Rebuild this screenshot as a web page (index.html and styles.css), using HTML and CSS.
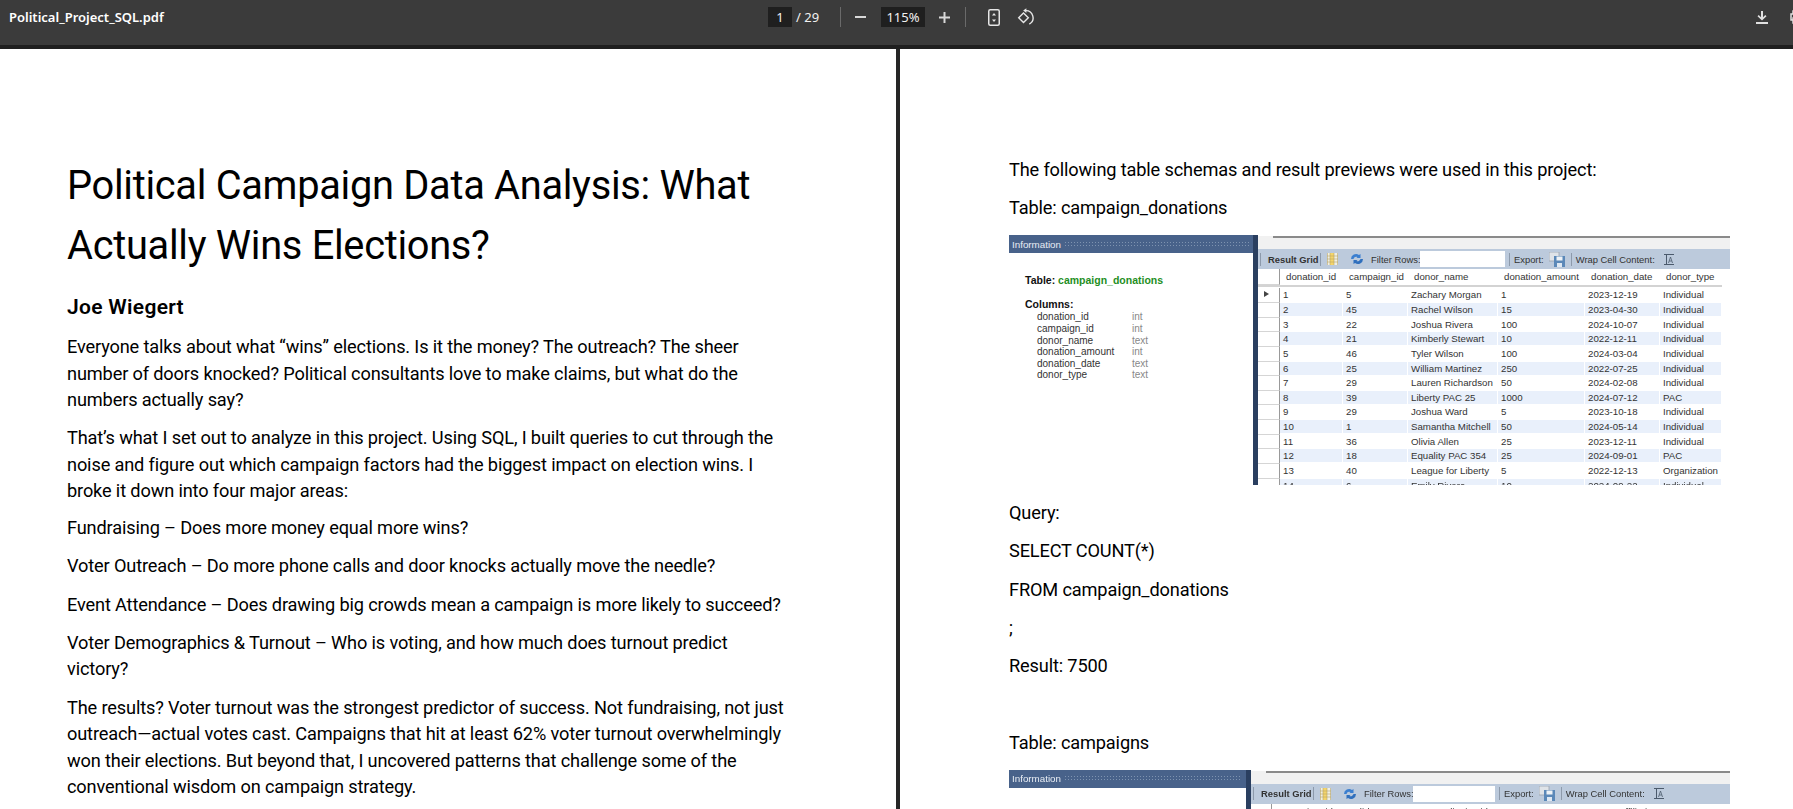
FILE: index.html
```html
<!DOCTYPE html>
<html lang="en">
<head>
<meta charset="utf-8">
<title>Political_Project_SQL.pdf</title>
<link rel="stylesheet" href="styles.css">
</head>
<body>
<header class="toolbar">
  <div class="file">Political_Project_SQL.pdf</div>
  <div class="pager"><span class="box box-page">1</span><span class="total">/ 29</span></div>
  <span class="tsep tsep-a"></span>
  <svg class="ticon minus" width="11" height="2" viewBox="0 0 11 2"><rect width="11" height="2" fill="#d8d8d8"/></svg>
  <span class="box box-zoom">115%</span>
  <svg class="ticon plus" width="11" height="11" viewBox="0 0 11 11"><path d="M4.5 0h2v4.500h4.500v2h-4.500v4.500h-2v-4.500h-4.500v-2h4.500z" fill="#d8d8d8"/></svg>
  <span class="tsep tsep-b"></span>
  <svg class="ticon fit" width="12" height="17" viewBox="0 0 12 17"><rect x=".75" y=".75" width="10.500" height="15.500" rx="1.500" fill="none" stroke="#e6e6e6" stroke-width="1.500"/><path d="M6 4l2 2.500h-4zM6 13l-2-2.500h4z" fill="#e6e6e6"/></svg>
  <svg class="ticon rotate" width="18" height="18" viewBox="0 0 18 18"><path d="M6.500 5l4.800 4.800-4.800 4.800-4.800-4.800z" fill="none" stroke="#e6e6e6" stroke-width="1.400"/><path d="M8.500 2.600a7.200 7.200 0 0 1 3.800 13.500" fill="none" stroke="#e6e6e6" stroke-width="1.400"/><path d="M9.400 .2v4.800l-3.200-2.400z" fill="#e6e6e6"/></svg>
  <svg class="ticon download" width="12" height="13" viewBox="0 0 12 13"><path d="M5 0h2v6.200l2.300-2.200 1.200 1.200-4.500 4.300-4.500-4.300 1.200-1.200 2.300 2.200zM0 11h12v2h-12z" fill="#e0e0e0"/></svg>
  <svg class="ticon print" width="14" height="14" viewBox="0 0 14 14"><path d="M3 4v-3h8v3M3 10h-2v-6h12v6h-2M3 8h8v5h-8z" fill="none" stroke="#e0e0e0" stroke-width="1.500"/></svg>
</header>

<main class="viewer">
  <section class="page page-left">
    <h1>Political Campaign Data Analysis: What<br>Actually Wins Elections?</h1>
    <h2>Joe Wiegert</h2>
    <p>Everyone talks about what “wins” elections. Is it the money? The outreach? The sheer<br>number of doors knocked? Political consultants love to make claims, but what do the<br>numbers actually say?</p>
    <p class="tight">That’s what I set out to analyze in this project. Using SQL, I built queries to cut through the<br>noise and figure out which campaign factors had the biggest impact on election wins. I<br>broke it down into four major areas:</p>
    <p>Fundraising – Does more money equal more wins?</p>
    <p>Voter Outreach – Do more phone calls and door knocks actually move the needle?</p>
    <p>Event Attendance – Does drawing big crowds mean a campaign is more likely to succeed?</p>
    <p>Voter Demographics &amp; Turnout – Who is voting, and how much does turnout predict<br>victory?</p>
    <p>The results? Voter turnout was the strongest predictor of success. Not fundraising, not just<br>outreach—actual votes cast. Campaigns that hit at least 62% voter turnout overwhelmingly<br>won their elections. But beyond that, I uncovered patterns that challenge some of the<br>conventional wisdom on campaign strategy.</p>
  </section>

  <section class="page page-right">
    <p>The following table schemas and result previews were used in this project:</p>
    <p class="before-shot">Table: campaign_donations</p>

    <div class="shot shot-one">
      <div class="info">
        <div class="info-head"><span>Information</span><i class="dots"></i></div>
        <div class="info-body">
          <div class="info-title">Table: <b>campaign_donations</b></div>
          <div class="info-cols">Columns:</div>
          <dl class="schema">
            <dt>donation_id</dt><dd>int</dd>
            <dt>campaign_id</dt><dd>int</dd>
            <dt>donor_name</dt><dd>text</dd>
            <dt>donation_amount</dt><dd>int</dd>
            <dt>donation_date</dt><dd>text</dd>
            <dt>donor_type</dt><dd>text</dd>
          </dl>
        </div>
      </div>
      <div class="results">
        <div class="strip"></div>
        <div class="rbar">
          <span class="rsep"></span><b class="rlabel">Result Grid</b><span class="rsep"></span>
          <svg class="ri ri-grid" width="11" height="12" viewBox="0 0 11 12"><rect width="11" height="12" fill="#f0f0e4"/><rect x="3" width="4" height="12" fill="#f4d56a"/><path d="M.5 0v12M3 0v12M7 0v12M10.500 0v12M0 3h11M0 6h11M0 9h11" stroke="#b9a56a" stroke-width=".6"/></svg>
          <svg class="ri ri-sync" width="14" height="12" viewBox="0 0 14 12"><path d="M1 6a5 5 0 0 1 8-4l1.500-1v4h-4l1-1a3 3 0 0 0-4 2z" fill="#3b7fd0"/><path d="M13 6a5 5 0 0 1-8 4l-1.500 1v-4h4l-1 1a3 3 0 0 0 4-2z" fill="#2f6fbd"/></svg>
          <span class="rtext rfilter">Filter Rows:</span><span class="rinput"></span><span class="rsep"></span>
          <span class="rtext">Export:</span>
          <svg class="ri ri-save" width="16" height="15" viewBox="0 0 16 15"><rect width="10" height="9" fill="#dfe3e8" stroke="#9aa4b0" stroke-width=".8"/><rect x="5" y="4" width="11" height="11" fill="#5b88b8"/><rect x="7.500" y="4.500" width="6" height="4" fill="#eef2f6"/><rect x="8" y="11" width="5" height="4" fill="#dfe8f2"/></svg>
          <span class="rsep"></span><span class="rtext">Wrap Cell Content:</span>
          <svg class="ri ri-wrap" width="10" height="11" viewBox="0 0 10 11"><path d="M0 .5h10M0 10.500h10M2.500 1v9" stroke="#4b5a6c" fill="none"/><path d="M4.500 9l2-6 2 6M5.300 7h2.400" stroke="#4b5a6c" fill="none" stroke-width=".8"/></svg>
        </div>
        <div class="grid">
          <div class="row head"><span></span><span>donation_id</span><span>campaign_id</span><span>donor_name</span><span>donation_amount</span><span>donation_date</span><span>donor_type</span></div>
          <div class="row"><span class="mark"></span><span>1</span><span>5</span><span>Zachary Morgan</span><span>1</span><span>2023-12-19</span><span>Individual</span></div>
          <div class="row"><span></span><span>2</span><span>45</span><span>Rachel Wilson</span><span>15</span><span>2023-04-30</span><span>Individual</span></div>
          <div class="row"><span></span><span>3</span><span>22</span><span>Joshua Rivera</span><span>100</span><span>2024-10-07</span><span>Individual</span></div>
          <div class="row"><span></span><span>4</span><span>21</span><span>Kimberly Stewart</span><span>10</span><span>2022-12-11</span><span>Individual</span></div>
          <div class="row"><span></span><span>5</span><span>46</span><span>Tyler Wilson</span><span>100</span><span>2024-03-04</span><span>Individual</span></div>
          <div class="row"><span></span><span>6</span><span>25</span><span>William Martinez</span><span>250</span><span>2022-07-25</span><span>Individual</span></div>
          <div class="row"><span></span><span>7</span><span>29</span><span>Lauren Richardson</span><span>50</span><span>2024-02-08</span><span>Individual</span></div>
          <div class="row"><span></span><span>8</span><span>39</span><span>Liberty PAC 25</span><span>1000</span><span>2024-07-12</span><span>PAC</span></div>
          <div class="row"><span></span><span>9</span><span>29</span><span>Joshua Ward</span><span>5</span><span>2023-10-18</span><span>Individual</span></div>
          <div class="row"><span></span><span>10</span><span>1</span><span>Samantha Mitchell</span><span>50</span><span>2024-05-14</span><span>Individual</span></div>
          <div class="row"><span></span><span>11</span><span>36</span><span>Olivia Allen</span><span>25</span><span>2023-12-11</span><span>Individual</span></div>
          <div class="row"><span></span><span>12</span><span>18</span><span>Equality PAC 354</span><span>25</span><span>2024-09-01</span><span>PAC</span></div>
          <div class="row"><span></span><span>13</span><span>40</span><span>League for Liberty</span><span>5</span><span>2022-12-13</span><span>Organization</span></div>
          <div class="row"><span></span><span>14</span><span>6</span><span>Emily Rivera</span><span>10</span><span>2024-09-22</span><span>Individual</span></div>
        </div>
      </div>
    </div>

    <p class="after-shot">Query:</p>
    <p>SELECT COUNT(*)</p>
    <p>FROM campaign_donations</p>
    <p>;</p>
    <p>Result: 7500</p>
    <p>&nbsp;</p>
    <p class="before-shot2">Table: campaigns</p>

    <div class="shot shot-two">
      <div class="info">
        <div class="info-head"><span>Information</span><i class="dots"></i></div>
        <div class="info-body">
          <div class="info-title">Table: <b>campaigns</b></div>
        </div>
      </div>
      <div class="results">
        <div class="strip"></div>
        <div class="rbar">
          <span class="rsep"></span><b class="rlabel">Result Grid</b><span class="rsep"></span>
          <svg class="ri ri-grid" width="11" height="12" viewBox="0 0 11 12"><rect width="11" height="12" fill="#f0f0e4"/><rect x="3" width="4" height="12" fill="#f4d56a"/><path d="M.5 0v12M3 0v12M7 0v12M10.500 0v12M0 3h11M0 6h11M0 9h11" stroke="#b9a56a" stroke-width=".6"/></svg>
          <svg class="ri ri-sync" width="14" height="12" viewBox="0 0 14 12"><path d="M1 6a5 5 0 0 1 8-4l1.500-1v4h-4l1-1a3 3 0 0 0-4 2z" fill="#3b7fd0"/><path d="M13 6a5 5 0 0 1-8 4l-1.500 1v-4h4l-1 1a3 3 0 0 0 4-2z" fill="#2f6fbd"/></svg>
          <span class="rtext rfilter">Filter Rows:</span><span class="rinput"></span><span class="rsep"></span>
          <span class="rtext">Export:</span>
          <svg class="ri ri-save" width="16" height="15" viewBox="0 0 16 15"><rect width="10" height="9" fill="#dfe3e8" stroke="#9aa4b0" stroke-width=".8"/><rect x="5" y="4" width="11" height="11" fill="#5b88b8"/><rect x="7.500" y="4.500" width="6" height="4" fill="#eef2f6"/><rect x="8" y="11" width="5" height="4" fill="#dfe8f2"/></svg>
          <span class="rsep"></span><span class="rtext">Wrap Cell Content:</span>
          <svg class="ri ri-wrap" width="10" height="11" viewBox="0 0 10 11"><path d="M0 .5h10M0 10.500h10M2.500 1v9" stroke="#4b5a6c" fill="none"/><path d="M4.500 9l2-6 2 6M5.300 7h2.400" stroke="#4b5a6c" fill="none" stroke-width=".8"/></svg>
        </div>
        <div class="grid">
          <div class="row head"><span></span><span>campaign_id</span><span>candidate</span><span>district_id</span><span>year</span><span>party_affiliation</span><span>state</span></div>
        </div>
      </div>
    </div>
  </section>
</main>
</body>
</html>
```

FILE: styles.css
```css
* { box-sizing: border-box; }
html, body { margin: 0; height: 100%; overflow: hidden; background: #fff; }
body { font-family: Roboto, "Liberation Sans", sans-serif; color: #000; display: flex; flex-direction: column; width: 1793px; height: 809px; }

/* viewer chrome */
.toolbar { flex: 0 0 49px; height: 49px; background: #3b3b3b; border-bottom: 4px solid #1f1f1f; display: flex; align-items: center; padding-bottom: 11px; color: #f1f1f1; font-family: "Noto Sans", sans-serif; font-size: 13px; overflow: hidden; }
.toolbar > * { flex: none; }
.file { width: 768px; padding-left: 9px; font-weight: 600; color: #fff; }
.pager { display: flex; align-items: center; width: 72px; }
.box { background: #1f1f1f; height: 20px; display: flex; align-items: center; justify-content: center; }
.box-page { width: 24px; }
.total { margin-left: 4px; }
.tsep { width: 1px; height: 20px; background: #6a6a6a; }
.ticon { display: block; }
.minus { margin-left: 14px; }
.box-zoom { width: 44px; margin-left: 15px; }
.plus { margin-left: 14px; }
.tsep-b { margin-left: 15px; }
.fit { margin-left: 22px; }
.rotate { margin-left: 17px; }
.download { margin-left: 721px; }
.print { margin-left: 22px; }

.viewer { flex: 1; display: flex; min-height: 0; }
.page { background: #fff; overflow: hidden; }
.page-left { flex: 0 0 896px; padding: 107px 0 0 67px; }
.page-right { flex: 1; border-left: 4px solid #262626; padding: 108px 0 0 109px; }

h1 { margin: 0; font-size: 39.800px; line-height: 60px; font-weight: 400; letter-spacing: -.3px; }
h2 { margin: 14.500px 0 0; font-size: 21px; line-height: 32px; font-weight: 600; letter-spacing: .3px; }
p { margin: 0 0 11.900px; font-size: 18.200px; line-height: 26.500px; white-space: nowrap; letter-spacing: -.15px; }
h2 + p { margin-top: 11.500px; }
p.tight { margin-bottom: 9.900px; }

/* embedded Workbench screenshots */
.before-shot { margin-bottom: 13.500px; }
.before-shot2 { margin-bottom: 13px; }
.after-shot { margin-top: 14.500px; }
.shot { width: 721px; display: flex; overflow: hidden; font-family: "Liberation Sans", Arimo, sans-serif; font-size: 9.700px; color: #222; filter: blur(.3px); background: #fff; }
.shot-one { height: 250px; }
.shot-two { height: 60px; }
.info { flex: 0 0 244px; }
.shot-two .info { flex-basis: 237px; }
.info-head { height: 18px; background: #48628a; color: #e8edf4; display: flex; align-items: center; gap: 3px; padding-left: 3px; font-size: 9.800px; }
.dots { flex: 1; height: 7px; margin-right: 4px; background-image: radial-gradient(#7e93b0 .8px, transparent .9px); background-size: 3px 3px; }
.info-body { padding: 20px 0 0 16px; }
.info-title { font-weight: 700; font-size: 10.500px; line-height: 14px; color: #111; }
.info-title b { color: #1f8f1f; }
.info-cols { font-weight: 700; font-size: 10.500px; line-height: 14px; margin-top: 10px; color: #111; }
.schema { margin: 0; padding-left: 12px; display: grid; grid-template-columns: 95px 1fr; grid-auto-rows: 11.600px; line-height: 11.600px; font-size: 10px; }
.schema dt { color: #333; }
.schema dd { margin: 0; color: #888; }

.results { flex: 1; min-width: 0; border-left: 5px solid #2a3f60; }
.strip { height: 14px; background: #f1f1f1; border-top: 1px solid #fff; }
.strip::before { content: ""; display: block; height: 2px; margin-left: 15px; background: #8a8a8a; }
.rbar { height: 20px; background: #bccadc; display: flex; align-items: center; padding-left: 2px; color: #333; font-size: 9.400px; white-space: nowrap; }
.rsep { width: 1px; height: 13px; background: #8d9aab; flex: none; }
.rlabel { width: 59px; padding-left: 7px; font-weight: 700; flex: none; }
.ri { flex: none; display: block; }
.ri-grid { margin-left: 6px; }
.ri-sync { margin-left: 12px; }
.rfilter { margin-left: 7px; width: 49px; flex: none; }
.rinput { width: 85px; height: 16px; background: #fff; flex: none; margin-right: 4px; }
.rbar .rtext + .ri-save { margin-left: 5px; }
.rbar .rsep + .rtext { margin-left: 4px; }
.ri-save + .rsep { margin-left: 6px; }
.ri-wrap { margin-left: 9px; }
.shot-two .rinput { width: 82px; }

.grid { font-size: 9.700px; color: #333; }
.row { display: grid; grid-template-columns: 22px 63px 65px 90px 87px 75px 62px; height: 14.630px; width: 464px; }
.row > span { white-space: nowrap; line-height: 13px; padding-left: 3px; margin-right: 1px; height: 13px; overflow: hidden; }
.row > span:first-child { background: #fff; border-right: 1px solid #999; border-bottom: 1px solid #d5d5d5; height: 14.630px; margin-right: 0; position: relative; }
.row:nth-child(odd):not(.head) > span:not(:first-child) { background: #e9f0fb; }
.row.head { height: 18px; border-bottom: 2px solid #d3d3d3; margin-bottom: 1px; }
.row.head > span { height: 16px; line-height: 16px; padding-left: 6px; }
.row.head > span:first-child { height: 16px; }
.mark::after { content: ""; position: absolute; left: 6px; top: 3px; border-left: 5px solid #444; border-top: 3.500px solid transparent; border-bottom: 3.500px solid transparent; }
.shot-two .row { grid-template-columns: 21px 63px 106px 89px 57px 77px 66px; width: 479px; }
```
